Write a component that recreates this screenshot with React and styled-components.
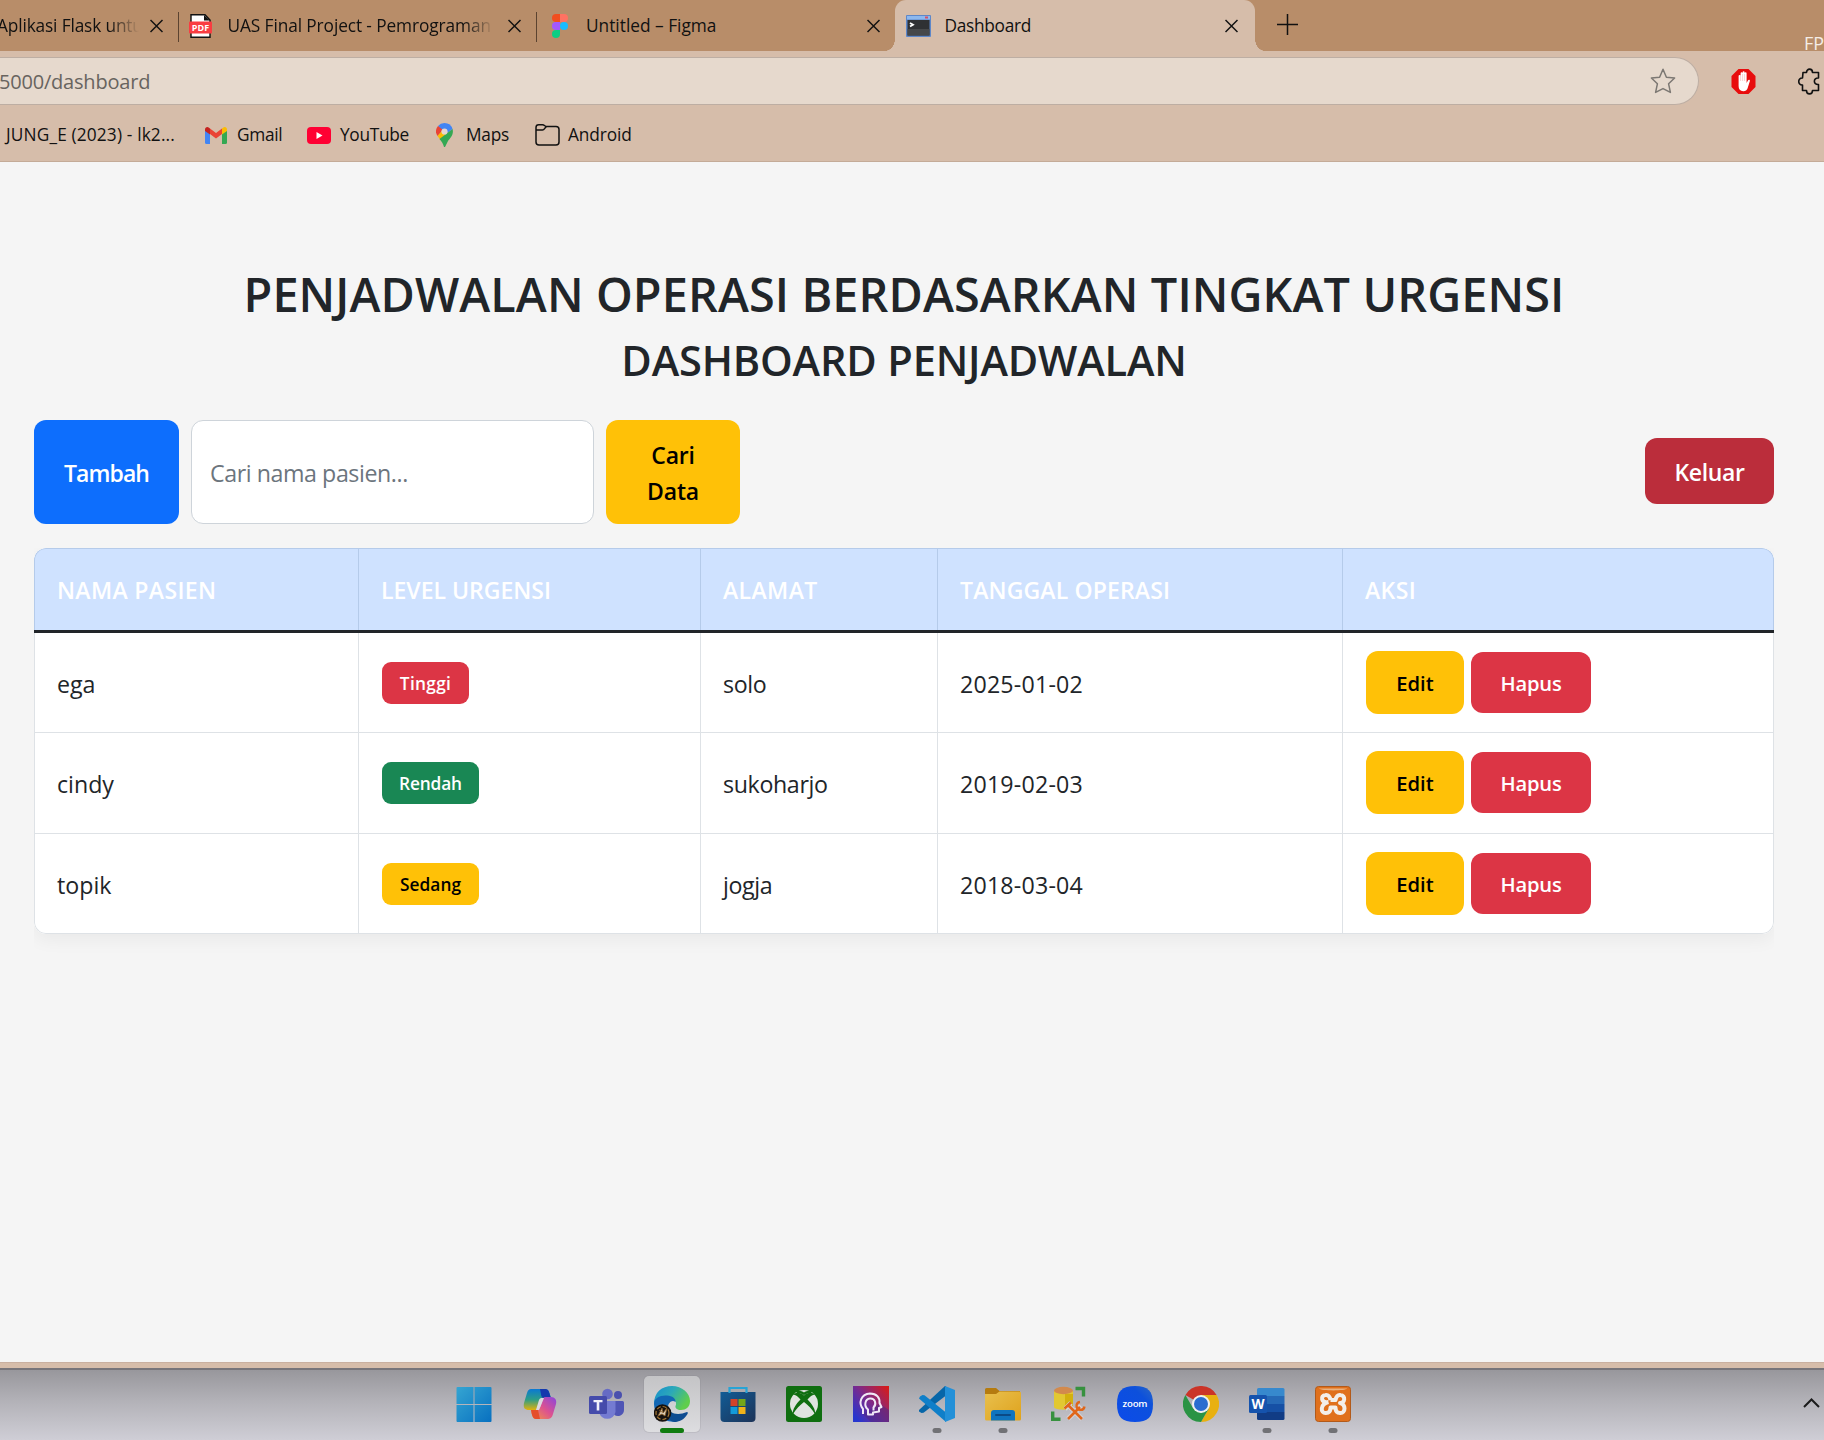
import React from "react";
import styled, { createGlobalStyle, css } from "styled-components";

const GlobalStyle = createGlobalStyle`
  *, *::before, *::after { box-sizing: border-box; }
  html, body { margin: 0; padding: 0; overflow: hidden; }
  body, button, input, table {
    font-family: "Open Sans", "Noto Sans", sans-serif;
  }
`;

const Screen = styled.div`
  width: 1824px;
  height: 1440px;
  display: flex;
  flex-direction: column;
  overflow: hidden;
  background: #f5f5f5;
`;

/* ---------- browser chrome ---------- */

const TabBar = styled.div`
  display: flex;
  height: 51px;
  flex: none;
  background: #b88d69;
  color: #111;
`;

const TabItem = styled.div`
  position: relative;
  display: flex;
  align-items: center;
  width: ${(p) => p.$width}px;
  height: 51px;
  padding: 0 ${(p) => (p.$active ? 17 : 15)}px 0 ${(p) => p.$pad}px;
  flex: none;
  ${(p) =>
    p.$active &&
    css`
      background: #d6bdaa;
      border-radius: 11px 11px 0 0;
      &::before,
      &::after {
        content: "";
        position: absolute;
        bottom: 0;
        width: 10px;
        height: 12px;
      }
      &::before {
        left: -10px;
        background: radial-gradient(ellipse 10px 12px at 0 0, transparent 97%, #d6bdaa 100%);
      }
      &::after {
        right: -10px;
        background: radial-gradient(ellipse 10px 12px at 100% 0, transparent 97%, #d6bdaa 100%);
      }
    `}
`;

const TabTitle = styled.span`
  flex: none;
  width: ${(p) => p.$width}px;
  margin-left: ${(p) => p.$gap}px;
  font-size: 17.3px;
  line-height: 24px;
  letter-spacing: ${(p) => p.$track || 0}px;
  white-space: nowrap;
  overflow: hidden;
  ${(p) =>
    p.$fade &&
    css`
      mask-image: linear-gradient(to right, #000 calc(100% - 30px), transparent 100%);
    `}
`;

const TabClose = styled.span`
  display: flex;
  margin-left: auto;
`;

const TabDivider = styled.span`
  width: 1px;
  height: 30px;
  margin-top: 12px;
  background: #5b4330;
  flex: none;
`;

const NewTab = styled.span`
  display: flex;
  margin: 14px 0 0 22px;
  height: 21px;
`;

const WindowCaption = styled.span`
  width: 20px;
  height: 51px;
  margin-left: auto;
  padding-top: 31px;
  overflow: hidden;
  white-space: nowrap;
  color: #f5ede6;
  font-size: 18px;
  line-height: 24px;
`;

const Toolbar = styled.div`
  display: flex;
  align-items: center;
  flex: none;
  height: 60px;
  background: #d6bdaa;
`;

const AddressBar = styled.div`
  display: flex;
  align-items: center;
  justify-content: space-between;
  width: 1699px;
  height: 48px;
  padding-right: 22px;
  border: 1px solid #bdaea3;
  border-left: 0;
  border-radius: 0 24px 24px 0;
  background: #e6d9cd;
  color: #68645f;
  font-size: 20px;
  line-height: 28px;
  letter-spacing: -0.2px;
`;

const Address = styled.span`
  margin-left: -1px;
  padding-top: 2px;
`;

const ExtensionIcon = styled.span`
  display: flex;
  margin-left: ${(p) => p.$gap}px;
`;

const BookmarkBar = styled.div`
  display: flex;
  align-items: center;
  flex: none;
  height: 51px;
  padding-left: 6px;
  padding-bottom: 2px;
  background: #d6bdaa;
  border-bottom: 1px solid #c4ab98;
  color: #111;
  font-size: 17.3px;
`;

const Bookmark = styled.span`
  display: flex;
  align-items: center;
  gap: ${(p) => p.$gap || 0}px;
  width: ${(p) => p.$width}px;
  flex: none;
  line-height: 22px;
  white-space: nowrap;
  letter-spacing: ${(p) => p.$track || 0}px;
`;

/* ---------- page ---------- */

const Page = styled.main`
  flex: none;
  height: 1200px;
  padding: 103px 50px 0 34px;
  background: #f5f5f5;
  color: #212529;
`;

const Title = styled.h1`
  margin: 0;
  text-align: center;
  white-space: nowrap;
  font-weight: 600;
  font-size: 46.8px;
  line-height: 58px;
  letter-spacing: 0.1px;
`;

const Subtitle = styled.h2`
  margin: 11px 0 0;
  text-align: center;
  white-space: nowrap;
  font-weight: 600;
  font-size: 41.6px;
  line-height: 52px;
  letter-spacing: -0.17px;
`;

const Controls = styled.div`
  display: flex;
  align-items: center;
  justify-content: space-between;
  height: 104px;
  margin-top: 34px;
`;

const SearchGroup = styled.form`
  display: flex;
  align-items: stretch;
  gap: 12px;
  height: 104px;
`;

const tones = {
  primary: ["#0d6efd", "#fff"],
  warning: ["#ffc107", "#000"],
  danger: ["#dc3545", "#fff"],
  dangerDark: ["#bb2d3b", "#fff"],
  success: ["#198754", "#fff"],
};

const Button = styled.button`
  width: ${(p) => p.$width}px;
  height: ${(p) => (p.$height ? p.$height + "px" : "auto")};
  padding: ${(p) => p.$drop || 0}px ${(p) => p.$padX || 0}px 0;
  border: 0;
  border-radius: 12px;
  background: ${(p) => tones[p.$tone][0]};
  color: ${(p) => tones[p.$tone][1]};
  font-weight: 600;
  font-size: ${(p) => p.$size || 23}px;
  line-height: 36px;
  letter-spacing: ${(p) => p.$track || 0}px;
`;

const LogoutButton = styled(Button)`
  margin-bottom: 2px;
`;

const SearchInput = styled.input`
  width: 403px;
  padding: 2px 18px 0;
  border: 1px solid #ced4da;
  border-radius: 12px;
  background: #fff;
  color: #212529;
  font-size: 23.2px;
  outline: 0;
  &::placeholder {
    color: #6c757d;
    opacity: 1;
    letter-spacing: -0.42px;
  }
`;

const TableClip = styled.div`
  margin-top: 24px;
  padding-bottom: 30px;
  overflow: hidden;
`;

const TableCard = styled.div`
  border-radius: 12px;
  overflow: hidden;
  box-shadow: 0 6px 18px rgba(0, 0, 0, 0.05);
`;

const Table = styled.table`
  width: 1740px;
  table-layout: fixed;
  border-collapse: separate;
  border-spacing: 0;
  background: #fff;
`;

const HeadRow = styled.tr`
  height: 82px;
`;

const HeadCell = styled.th`
  width: ${(p) => p.$width}px;
  height: 82px;
  padding: 1px 0 0 22px;
  text-align: left;
  font-weight: 600;
  font-size: 23px;
  letter-spacing: ${(p) => p.$track || 0}px;
  color: #fff;
  background: #cfe2ff;
  border: solid #b5cbea;
  border-width: 1px 0 0 1px;
  &:first-child { border-top-left-radius: 12px; }
  &:last-child {
    border-right-width: 1px;
    border-top-right-radius: 12px;
  }
`;

const RuleCell = styled.td`
  height: 3px;
  padding: 0;
  background: #212529;
`;

const Cell = styled.td`
  height: ${(p) => p.$height}px;
  padding: ${(p) => (p.$text ? "2px 0 0 22px" : "0 0 0 23px")};
  font-size: 23.2px;
  letter-spacing: ${(p) => p.$track || 0}px;
  border: solid #dee2e6;
  border-width: 0 0 1px 1px;
  &:last-child { border-right-width: 1px; }
  tr:last-child &:first-child { border-bottom-left-radius: 12px; }
  tr:last-child &:last-child { border-bottom-right-radius: 12px; }
`;

const Badge = styled.span`
  display: flex;
  align-items: center;
  justify-content: center;
  width: ${(p) => p.$width}px;
  height: 42px;
  padding-top: 1px;
  border-radius: 9px;
  background: ${(p) => tones[p.$tone][0]};
  color: ${(p) => tones[p.$tone][1]};
  font-weight: 600;
  font-size: 17.3px;
  letter-spacing: ${(p) => p.$track || 0}px;
`;

const Actions = styled.div`
  display: flex;
  align-items: center;
  gap: 7px;
  height: 63px;
  margin-bottom: 1px;
`;

/* ---------- taskbar ---------- */

const WindowEdge = styled.div`
  flex: none;
  height: 6px;
  background: #d6bdaa;
  border-top: 1px solid #c9b0a0;
`;

const Taskbar = styled.footer`
  display: flex;
  align-items: flex-start;
  flex: none;
  height: 72px;
  padding: 6px 4px 0 446px;
  border-top: 2px solid #77757a;
  background: linear-gradient(to bottom, #98979c 0, #b3b2b8 45%, #cfced6 100%);
`;

const TaskItem = styled.span`
  position: relative;
  display: flex;
  align-items: center;
  justify-content: center;
  width: 56px;
  height: 56px;
  margin-right: 10.1px;
  flex: none;
  border-radius: 5px;
  ${(p) =>
    p.$active &&
    css`
      background: linear-gradient(#c4c4c6, #dddde0);
      box-shadow: 0 0 0 1px rgba(120, 120, 125, 0.15);
    `}
`;

const Indicator = styled.span`
  position: absolute;
  left: 50%;
  bottom: -1px;
  width: ${(p) => (p.$active ? 24 : 9)}px;
  height: 5px;
  border-radius: 3px;
  transform: translateX(-50%);
  background: ${(p) => (p.$active ? "#107c10" : "#717175")};
`;

const TrayToggle = styled.span`
  display: flex;
  margin: 22px 0 0 auto;
`;

/* ---------- icons ---------- */

const CloseIcon = () => (
  <svg width="13" height="14" viewBox="0 0 13 14" fill="none" stroke="#111" strokeWidth="1.5">
    <path d="M0.5 1 12.5 13M12.5 1 0.5 13" />
  </svg>
);

const PdfIcon = () => (
  <svg width="23" height="24" viewBox="0 0 23 24">
    <path d="M2 .8H16L21 6V23.2H2Z" fill="#fff" stroke="#111" strokeWidth="1.4" />
    <path d="M15 1V6.5H21Z" fill="#111" />
    <rect x="0" y="7.5" width="23" height="12" rx="1" fill="#f93c41" />
    <text x="11.5" y="17" textAnchor="middle" fontSize="9" fontWeight="700" fill="#fff" fontFamily="Open Sans, sans-serif">PDF</text>
  </svg>
);

const FigmaIcon = () => (
  <svg width="16" height="24" viewBox="0 0 16 24">
    <path d="M8 0H4a4 4 0 0 0 0 8h4Z" fill="#f24e1e" />
    <path d="M8 0h4a4 4 0 0 1 0 8H8Z" fill="#ff7262" />
    <path d="M8 8H4a4 4 0 0 0 0 8h4Z" fill="#a259ff" />
    <circle cx="12" cy="12" r="4" fill="#1abcfe" />
    <path d="M4 16h4v4a4 4 0 1 1-4-4Z" fill="#0acf83" />
  </svg>
);

const TerminalIcon = () => (
  <svg width="25" height="22" viewBox="0 0 25 22">
    <rect width="25" height="22" rx="1" fill="#5d87c9" />
    <rect x="1" y="1" width="23" height="3.5" fill="#8db8ee" />
    <rect x="19" y="1.5" width="3" height="2" fill="#d4516a" />
    <rect x="1.500" y="5" width="22" height="15.500" fill="#2f3134" />
    <rect x="1.500" y="14" width="22" height="6.500" fill="#46484a" />
    <path d="M4 8l3 1.800L4 11.600" fill="none" stroke="#fff" strokeWidth="1.800" />
  </svg>
);

const PlusIcon = () => (
  <svg width="21" height="21" viewBox="0 0 21 21" stroke="#111" strokeWidth="1.5">
    <path d="M10.5 0V21M0 10.5H21" />
  </svg>
);

const StarIcon = () => (
  <svg width="26" height="26" viewBox="0 0 26 26" fill="none" stroke="#7c7873" strokeWidth="1.5" strokeLinejoin="round">
    <path d="M13 1.3 16.4 9.2 24.6 10 18.6 15.8 20.4 24.4 13 20.6 5.6 24.4 7.4 15.8 1.4 10 9.6 9.2Z" />
  </svg>
);

const StopHandIcon = () => (
  <svg width="25" height="27" viewBox="0 0 25 27">
    <path d="M7.5 1h10L24.5 8v11l-7 7h-10L.5 19V8Z" fill="#e80d0d" />
    <path
      d="M7.6 8a1 1 0 0 1 2 0V5.200a1 1 0 0 1 2 0V4.300a1 1 0 0 1 2 0V5.200a1 1 0 0 1 2 0V15l1.300-2.600c.7-1.200 2.300-.6 2 .6l-1.900 6c-.8 3-2 4.300-4.800 4.300-3.100 0-4.600-2-4.600-5.200Z"
      fill="#fff"
    />
    <path d="M9.600 8v5M11.600 6v7M13.600 6v7" stroke="#f3a5a5" strokeWidth=".5" />
  </svg>
);

const PuzzleIcon = () => (
  <svg width="22" height="27" viewBox="0 0 22 27" fill="none" stroke="#111" strokeWidth="1.6" strokeLinejoin="round">
    <path d="M5 4.500H8.500C8.500 0 14.500 0 14.500 4.500H20.500V10C15 9.500 15 17 20.500 16.500V22.500H14.500C14.500 27 8.500 27 8.500 22.500H4.500V17C-.5 17.500-.5 9.500 4.500 10Z" />
  </svg>
);

const GmailIcon = () => (
  <svg width="22" height="17" viewBox="0 0 22 17">
    <path d="M0 3V15.500A1.500 1.500 0 0 0 1.500 17H5V6Z" fill="#4285f4" />
    <path d="M22 3V15.500A1.500 1.500 0 0 1 20.500 17H17V6Z" fill="#34a853" />
    <path d="M5 1.500 11 6 17 1.500V7L11 11.600 5 7Z" fill="#ea4335" />
    <path d="M0 2.500C0 .3 2.300-.6 4 .7L5 1.500V7.600L0 4Z" fill="#c5221f" />
    <path d="M22 2.500C22 .3 19.700-.6 18 .7L17 1.500V7.600L22 4Z" fill="#fbbc04" />
  </svg>
);

const YouTubeIcon = () => (
  <svg width="24" height="17" viewBox="0 0 24 17">
    <rect width="24" height="17" rx="4" fill="#ff0033" />
    <path d="M9.500 5V12L15.500 8.500Z" fill="#fff" />
  </svg>
);

const MapsIcon = () => (
  <svg width="17" height="24" viewBox="0 0 17 24">
    <path d="M8.500 0A8.500 8.500 0 0 1 16.600 6L9 12 2 3A8.500 8.500 0 0 1 8.500 0Z" fill="#4285f4" />
    <path d="M2 3 7 7 1.500 13A8.500 8.500 0 0 1 2 3Z" fill="#ea4335" />
    <path d="M1.500 13 10.500 3 12 9 4.500 17Z" fill="#fbbc04" />
    <path d="M16.600 6C18 12 14 15 12 18L9 24H8C7 20 5.500 18.500 3.500 16Z" fill="#34a853" />
    <path d="M7 6 12.500 1 16 5 10.500 10Z" fill="#4285f4" />
    <circle cx="8.500" cy="8.500" r="3.100" fill="#e4d6d2" />
  </svg>
);

const FolderOutlineIcon = () => (
  <svg width="25" height="22" viewBox="0 0 25 22" fill="none" stroke="#111" strokeWidth="1.500">
    <path d="M1 17.500V3.500A2.700 2.700 0 0 1 3.700.8H7.500C9.500.8 10 2.500 11.500 2.500H21A3 3 0 0 1 24 5.500V18A3 3 0 0 1 21 21H4A3 3 0 0 1 1 18Z" />
    <path d="M1 6H7.500C9.500 6 9.500 4 11.500 2.500" />
  </svg>
);

const ChevronIcon = () => (
  <svg width="17" height="10" viewBox="0 0 17 10" fill="none" stroke="#1b1b1b" strokeWidth="2">
    <path d="M1 9 8.500 1.500 16 9" />
  </svg>
);

const AppSvg = ({ children }) => (
  <svg width="36" height="36" viewBox="0 0 36 36">{children}</svg>
);

const WindowsIcon = () => (
  <AppSvg>
    <defs>
      <linearGradient id="win" x1="0" y1="0" x2="1" y2="1" gradientUnits="objectBoundingBox">
        <stop offset="0" stopColor="#35a5d2" />
        <stop offset="1" stopColor="#0870c0" />
      </linearGradient>
    </defs>
    <path d="M.5 2a1 1 0 0 1 1-1H17.500V18H.5ZM18.500 1H34.500a1 1 0 0 1 1 1V18H18.500ZM.5 19H17.500V36H1.500a1 1 0 0 1-1-1ZM18.500 19H35.500V35a1 1 0 0 1-1 1H18.500Z" fill="url(#win)" />
  </AppSvg>
);

const CopilotIcon = () => (
  <AppSvg>
    <defs>
      <linearGradient id="cpA" x1="0" y1="0" x2="0" y2="1">
        <stop offset="0" stopColor="#0a78d4" />
        <stop offset=".5" stopColor="#2c9d87" />
        <stop offset="1" stopColor="#e2b20c" />
      </linearGradient>
      <linearGradient id="cpB" x1="1" y1="0" x2="0" y2="1">
        <stop offset="0" stopColor="#8a45dd" />
        <stop offset=".5" stopColor="#dc5290" />
        <stop offset="1" stopColor="#f5993f" />
      </linearGradient>
    </defs>
    <path d="M9 3H23C26 3 27 5 28 9L29 12H20L14 24H7C3 24 1 22 2 17L5 7C6 4 7 3 9 3Z" fill="url(#cpA)" />
    <path d="M18 3H23C26 3 27 5 28 9L29 12H22C20 12 19 10 19 8Z" fill="#1538ad" />
    <path d="M29 11C33 11 35 14 34 18L31 28C30 32 28 33 25 33H14C11 33 10 30 9 24H14C17 24 18 22 19 19L21 13C21.500 11.500 22 11 24 11Z" fill="url(#cpB)" />
    <path d="M9 24H16L18 33H14C11 33 10 30 9 24Z" fill="#e54e2c" />
    <path d="M20 12H22L17 24H14L17 14C17.700 12.500 18.500 12 20 12Z" fill="#dcd9df" />
  </AppSvg>
);

const TeamsIcon = () => (
  <AppSvg>
    <circle cx="19.500" cy="8" r="5.300" fill="#666bc4" />
    <circle cx="30" cy="9" r="4" fill="#4a50ae" />
    <path d="M25 15H34.500a1.500 1.500 0 0 1 1.500 1.500V24a6 6 0 0 1-10 4.500Z" fill="#4f55b5" />
    <path d="M11 15H27.500V26a8.400 8.400 0 0 1-16.500 0Z" fill="#747bd2" />
    <rect x="1" y="10" width="18" height="18" rx="1.500" fill="#454bab" />
    <path d="M5.500 14h9v2.300h-3.200V24.500H8.700V16.300H5.500Z" fill="#f0f0fa" />
  </AppSvg>
);

const EdgeIcon = () => (
  <AppSvg>
    <defs>
      <linearGradient id="edA" x1="0" y1="0" x2="1" y2=".5">
        <stop offset="0" stopColor="#168ed0" />
        <stop offset=".5" stopColor="#2ca9b8" />
        <stop offset="1" stopColor="#5fce4c" />
      </linearGradient>
    </defs>
    <path d="M0 18C0 6 8 0 18 0 28 0 36 7 36 15 36 21 32 24 27 24 23 24 21 22 21.500 20 23 18 22 12 15 11 8 10 1 13 0 18Z" fill="url(#edA)" />
    <path d="M0 18C0 12 6 9 13 9.500 19 10 22 13 21.500 16 18 13 14 17 14 21 14 29 22 34 26 34.500 12 39 0 30 0 18Z" fill="#1267b4" />
    <path d="M14 20C14 28 24 30 33 26 34 26 34 27 33.500 28 30 34 25 36 20 36 12 34 10 26 14 20Z" fill="#0f4c91" />
    <circle cx="8.500" cy="27" r="8.800" fill="#17120f" />
    <circle cx="8.500" cy="27" r="6.500" fill="none" stroke="#a87935" strokeWidth="1.200" strokeDasharray="4 2" />
    <path d="M4 30 8 22l1 5 4-5-2 8-3-2ZM5 24l3 2" fill="#d9cbb5" stroke="#8a5c22" strokeWidth=".8" />
  </AppSvg>
);

const StoreIcon = () => (
  <AppSvg>
    <defs>
      <linearGradient id="st" x1="0" y1="0" x2="1" y2="1">
        <stop offset="0" stopColor="#115c96" />
        <stop offset="1" stopColor="#1d3358" />
      </linearGradient>
    </defs>
    <path d="M.5 6H35.500V32a4 4 0 0 1-4 4H4.500a4 4 0 0 1-4-4Z" fill="url(#st)" />
    <path d="M9.500 7V2H26.500V7" fill="none" stroke="#27a4d6" strokeWidth="2.200" />
    <path d="M10.500 13h7v7h-7Z" fill="#d2432a" />
    <path d="M18.500 13h7v7h-7Z" fill="#74a61a" />
    <path d="M10.500 21h7v7h-7Z" fill="#139bd9" />
    <path d="M18.500 21h7v7h-7Z" fill="#f0b21a" />
  </AppSvg>
);

const XboxIcon = () => (
  <AppSvg>
    <rect width="36" height="36" rx="2.500" fill="#0f6e10" />
    <circle cx="18" cy="18" r="14" fill="#dfe3df" />
    <path d="M7 8.500C11 5.500 15 7 18 9.500 21 7 25 5.500 29 8.500 26.500 8.500 23.500 11 21.500 13.500 26 18 30 24 29 28 26 23 22 19 18 16 14 19 10 23 7 28 6 24 10 18 14.500 13.500 12.500 11 9.500 8.500 7 8.500Z" fill="#0f6e10" />
    <path d="M10 5.500C13 4 16 5.500 18 6.500 20 5.500 23 4 26 5.500L25 7C22 6.500 20 8 18 9 16 8 14 6.500 11 7Z" fill="#0f6e10" />
  </AppSvg>
);

const HeadIcon = () => (
  <AppSvg>
    <defs>
      <linearGradient id="hd" x1="0" y1=".8" x2="1" y2="0">
        <stop offset="0" stopColor="#2636cf" />
        <stop offset=".45" stopColor="#7b2a8c" />
        <stop offset="1" stopColor="#dd1a12" />
      </linearGradient>
    </defs>
    <rect width="36" height="36" fill="url(#hd)" />
    <path d="M10 28 18 36H36V24L27 18Z" fill="#4a2a86" opacity=".5" />
    <path d="M10 28V23C5 17 8 8 17 7.500 24 7.500 27 12 26.500 17L28.500 21 26 22V25.500L20 26.500V28.500H15V23.500C10.500 20 12 13 17 12.500 22 12 24 18 20.500 21.500V24.500" fill="none" stroke="#f0e8f6" strokeWidth="2" strokeLinejoin="round" />
  </AppSvg>
);

const CodeIcon = () => (
  <AppSvg>
    <path d="M26 0 0 24 0 25.500 2.500 27 4.500 26.800 27 9.500V0Z" fill="#0766a8" />
    <path d="M1 10.500 3.500 9 5.500 9.300 27 26.500V36L0 12.500Z" fill="#0f7fc9" />
    <path d="M26 0 36 4V32L26 36Z" fill="#2390d8" />
  </AppSvg>
);

const FolderIcon = () => (
  <AppSvg>
    <defs>
      <linearGradient id="fo" x1="0" y1="0" x2="1" y2="1">
        <stop offset="0" stopColor="#e8c04e" />
        <stop offset="1" stopColor="#dfa21c" />
      </linearGradient>
    </defs>
    <path d="M0 3.500A1.500 1.500 0 0 1 1.500 2H11L14.500 5H35V10H0Z" fill="#b57b0f" />
    <path d="M0 8H11L14.500 5.500H34.500A1.500 1.500 0 0 1 36 7V33A1.500 1.500 0 0 1 34.500 34.500H1.500A1.500 1.500 0 0 1 0 33Z" fill="url(#fo)" />
    <path d="M6 34.500V27A3 3 0 0 1 9 24H27A3 3 0 0 1 30 27V34.500Z" fill="#0f74be" />
    <path d="M11 29H25" stroke="#0b4a85" strokeWidth="2" strokeLinecap="round" />
  </AppSvg>
);

const DatabaseIcon = () => (
  <AppSvg>
    <path d="M3 5V21C3 24.500 22 24.500 22 21V5Z" fill="#e2c832" />
    <path d="M14 8H22V21L14 23.500Z" fill="#d3b10e" />
    <ellipse cx="12.500" cy="4.500" rx="9.500" ry="3.700" fill="#d28a4d" />
    <path d="M24.500 2.500H32.500V10.500" fill="none" stroke="#37913f" strokeWidth="3.400" />
    <path d="M1.700 25.500V33.300H9.500" fill="none" stroke="#37913f" strokeWidth="3.400" />
    <path d="M14 23 20 17M18 20 31 33M17 33 30 20" fill="none" stroke="#d4d3d8" strokeWidth="4.600" />
    <path d="M13.500 22.500 20 16.500M17.500 19.500 31 33M17 33 29 21" fill="none" stroke="#e0661a" strokeWidth="2.600" />
    <path d="M29 16A4 4 0 1 0 33.500 20.500" fill="none" stroke="#e0661a" strokeWidth="2.300" />
  </AppSvg>
);

const ZoomIcon = () => (
  <AppSvg>
    <defs>
      <linearGradient id="zm" x1="0" y1="1" x2="1" y2="0">
        <stop offset="0" stopColor="#0b4bea" />
        <stop offset=".7" stopColor="#0d50dc" />
        <stop offset="1" stopColor="#2a68c4" />
      </linearGradient>
    </defs>
    <path d="M18 0C31 0 36 5 36 18S31 36 18 36 0 31 0 18 5 0 18 0Z" fill="url(#zm)" />
    <text x="18" y="20.600" textAnchor="middle" fontSize="9.600" fontWeight="600" fill="#fff" fontFamily="Open Sans, sans-serif" textLength="25">zoom</text>
  </AppSvg>
);

const ChromeIcon = () => (
  <AppSvg>
    <path d="M18 18 2.400 9A18 18 0 0 1 33.600 9H18Z" fill="#cb3428" />
    <path d="M18 9H33.600A18 18 0 0 1 18 36L25.800 22.500Z" fill="#e8b010" />
    <path d="M2.400 9 10.200 22.500 18 27 25.800 22.500 18 36A18 18 0 0 1 2.400 9Z" fill="#2a9344" />
    <circle cx="18" cy="18" r="9" fill="#f0f0f0" />
    <circle cx="18" cy="18" r="7" fill="#2a6cd0" />
  </AppSvg>
);

const WordIcon = () => (
  <AppSvg>
    <path d="M8 3.500A1.500 1.500 0 0 1 9.500 2H34A1.500 1.500 0 0 1 35.500 3.500V10H8Z" fill="#3789cd" />
    <path d="M8 10H35.500V18H8Z" fill="#2669b6" />
    <path d="M8 18H35.500V26H8Z" fill="#1650a5" />
    <path d="M8 26H35.500V32.500A1.500 1.500 0 0 1 34 34H9.500A1.500 1.500 0 0 1 8 32.500Z" fill="#113c85" />
    <rect x="0" y="9" width="18" height="18" rx="1.500" fill="#1553ad" />
    <text x="9" y="22.800" textAnchor="middle" fontSize="13.500" fontWeight="700" fill="#fff" fontFamily="Open Sans, sans-serif">W</text>
  </AppSvg>
);

const XamppIcon = () => (
  <AppSvg>
    <rect x=".5" y=".5" width="35" height="35" rx="3" fill="#e0701c" stroke="#b25a1a" />
    <path d="M4 2.500H32C31 5 6 5 4 2.500Z" fill="#eab27f" />
    <path
      d="M13.500 16C6 17.500 5 9.500 10.500 9 14 8.500 15 11.500 15.500 14M15.500 14H20.500C21 11.500 22 8.500 25.500 9 31 9.500 30 17.500 25 17 31 18 31 27.500 25 27 21.500 27 20.500 24 20.500 21.500H15.500C15.500 24 14.500 27 11 27 5 27.500 5 18 13.500 16"
      fill="none"
      stroke="#f3eee9"
      strokeWidth="4"
      strokeLinejoin="round"
    />
  </AppSvg>
);

/* ---------- data ---------- */

const columns = [
  { label: "NAMA PASIEN", width: 324, track: 0.35 },
  { label: "LEVEL URGENSI", width: 342, track: 0 },
  { label: "ALAMAT", width: 237, track: 0.4 },
  { label: "TANGGAL OPERASI", width: 405, track: 0.15 },
  { label: "AKSI", width: 432, track: 0.4 },
];

const patients = [
  { name: "ega", level: "Tinggi", tone: "danger", badge: 87, badgeTrack: 0.3, address: "solo", date: "2025-01-02", height: 100 },
  { name: "cindy", level: "Rendah", tone: "success", badge: 97, badgeTrack: -0.15, address: "sukoharjo", date: "2019-02-03", height: 101 },
  { name: "topik", level: "Sedang", tone: "warning", badge: 97, badgeTrack: 0.05, address: "jogja", date: "2018-03-04", height: 100 },
];

const taskApps = [
  { id: "start", Icon: WindowsIcon },
  { id: "copilot", Icon: CopilotIcon },
  { id: "teams", Icon: TeamsIcon },
  { id: "edge", Icon: EdgeIcon, active: true },
  { id: "store", Icon: StoreIcon },
  { id: "xbox", Icon: XboxIcon },
  { id: "head", Icon: HeadIcon },
  { id: "code", Icon: CodeIcon, running: true },
  { id: "files", Icon: FolderIcon, running: true },
  { id: "database", Icon: DatabaseIcon },
  { id: "zoom", Icon: ZoomIcon },
  { id: "chrome", Icon: ChromeIcon },
  { id: "word", Icon: WordIcon, running: true },
  { id: "xampp", Icon: XamppIcon, running: true },
];

export default function App() {
  return (
    <Screen>
      <GlobalStyle />
      <TabBar>
        <TabItem $width={178} $pad={0}>
          <TabTitle $width={142} $gap={-3} $fade $track={-0.15}>Aplikasi Flask untuk</TabTitle>
          <TabClose><CloseIcon /></TabClose>
        </TabItem>
        <TabDivider />
        <TabItem $width={357} $pad={10}>
          <PdfIcon />
          <TabTitle $width={266} $gap={15.5} $fade $track={-0.1}>UAS Final Project - Pemrograman</TabTitle>
          <TabClose><CloseIcon /></TabClose>
        </TabItem>
        <TabDivider />
        <TabItem $width={358} $pad={15}>
          <FigmaIcon />
          <TabTitle $width={200} $gap={18} $track={0}>Untitled – Figma</TabTitle>
          <TabClose><CloseIcon /></TabClose>
        </TabItem>
        <TabItem $width={360} $pad={11} $active>
          <TerminalIcon />
          <TabTitle $width={200} $gap={13.5} $track={-0.3}>Dashboard</TabTitle>
          <TabClose><CloseIcon /></TabClose>
        </TabItem>
        <NewTab><PlusIcon /></NewTab>
        <WindowCaption>FP</WindowCaption>
      </TabBar>
      <Toolbar>
        <AddressBar>
          <Address>5000/dashboard</Address>
          <StarIcon />
        </AddressBar>
        <ExtensionIcon $gap={31.5}><StopHandIcon /></ExtensionIcon>
        <ExtensionIcon $gap={42.5}><PuzzleIcon /></ExtensionIcon>
      </Toolbar>
      <BookmarkBar>
        <Bookmark $width={199} $track={0.15}>JUNG_E (2023) - lk2...</Bookmark>
        <Bookmark $width={102} $gap={10} $track={-0.3}><GmailIcon />Gmail</Bookmark>
        <Bookmark $width={129} $gap={9} $track={-0.3}><YouTubeIcon />YouTube</Bookmark>
        <Bookmark $width={99} $gap={13} $track={-0.2}><MapsIcon />Maps</Bookmark>
        <Bookmark $width={110} $gap={8} $track={-0.1}><FolderOutlineIcon />Android</Bookmark>
      </BookmarkBar>

      <Page>
        <Title>PENJADWALAN OPERASI BERDASARKAN TINGKAT URGENSI</Title>
        <Subtitle>DASHBOARD PENJADWALAN</Subtitle>
        <Controls>
          <SearchGroup onSubmit={(e) => e.preventDefault()}>
            <Button type="button" $tone="primary" $width={145} $drop={2} $track={-0.9}>Tambah</Button>
            <SearchInput placeholder="Cari nama pasien..." />
            <Button type="submit" $tone="warning" $width={134} $padX={30} $drop={2} $track={-0.2}>Cari Data</Button>
          </SearchGroup>
          <LogoutButton type="button" $tone="dangerDark" $width={129} $height={66} $drop={2} $track={-0.35}>Keluar</LogoutButton>
        </Controls>
        <TableClip>
          <TableCard>
            <Table>
              <thead>
                <HeadRow>
                  {columns.map((c) => (
                    <HeadCell key={c.label} $width={c.width} $track={c.track}>{c.label}</HeadCell>
                  ))}
                </HeadRow>
                <tr>
                  <RuleCell colSpan={columns.length} />
                </tr>
              </thead>
              <tbody>
                {patients.map((p) => (
                  <tr key={p.name}>
                    <Cell $text $height={p.height}>{p.name}</Cell>
                    <Cell><Badge $tone={p.tone} $width={p.badge} $track={p.badgeTrack}>{p.level}</Badge></Cell>
                    <Cell $text $track={-0.35}>{p.address}</Cell>
                    <Cell $text $track={0.2}>{p.date}</Cell>
                    <Cell>
                      <Actions>
                        <Button $tone="warning" $width={98} $height={63} $size={20.2} $drop={1}>Edit</Button>
                        <Button $tone="danger" $width={120} $height={61} $size={20.2} $drop={1} $track={-0.2}>Hapus</Button>
                      </Actions>
                    </Cell>
                  </tr>
                ))}
              </tbody>
            </Table>
          </TableCard>
        </TableClip>
      </Page>

      <WindowEdge />
      <Taskbar>
        {taskApps.map(({ id, Icon, active, running }) => (
          <TaskItem key={id} $active={active}>
            <Icon />
            {(active || running) && <Indicator $active={active} />}
          </TaskItem>
        ))}
        <TrayToggle><ChevronIcon /></TrayToggle>
      </Taskbar>
    </Screen>
  );
}
